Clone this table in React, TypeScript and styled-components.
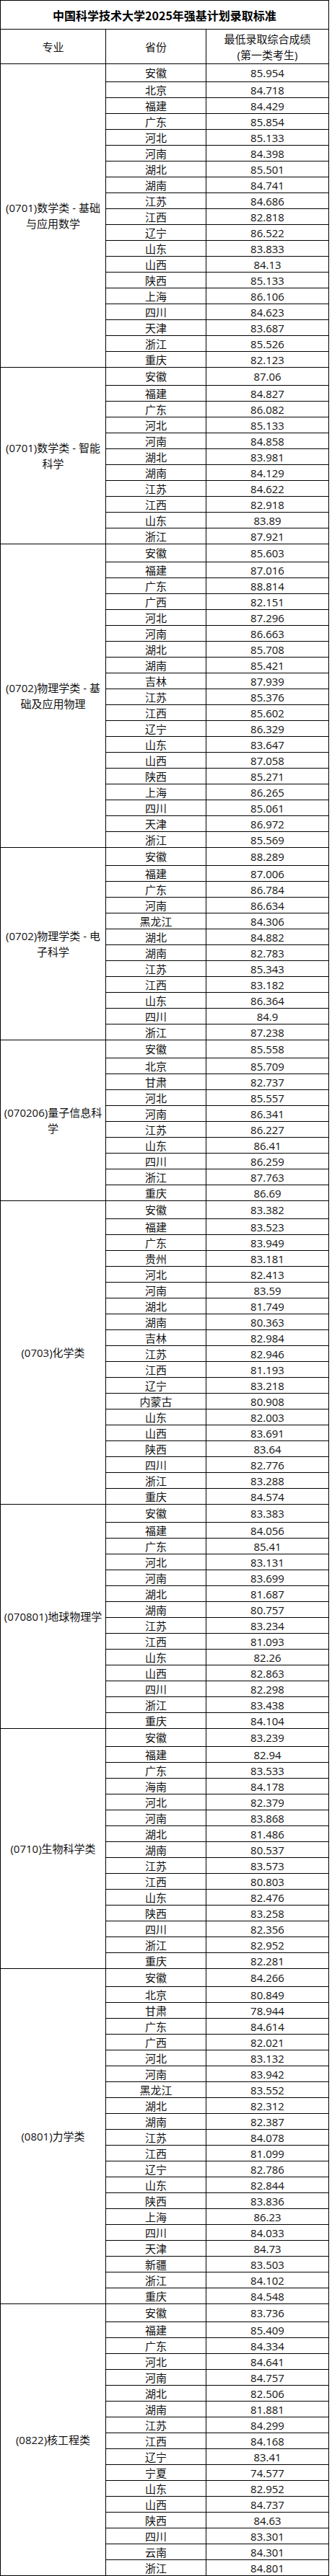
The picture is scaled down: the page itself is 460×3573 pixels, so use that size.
import React from "react"
import styled, { createGlobalStyle } from "styled-components"

const GlobalStyle = createGlobalStyle`
	html, body {
		margin: 0;
		padding: 0;
		background: #fff;
	}
	body {
		font-family: "Open Sans", "Noto Sans CJK SC", sans-serif;
		color: #111;
	}
`

interface Group {
	major: string[]
	rows: string
}

// "省份 成绩" pairs, separated by commas
const GROUPS: Group[] = [
	{
		major: ["(0701)数学类 - 基础", "与应用数学"],
		rows: "安徽 85.954,北京 84.718,福建 84.429,广东 85.854,河北 85.133,河南 84.398,湖北 85.501,湖南 84.741,江苏 84.686,江西 82.818,辽宁 86.522,山东 83.833,山西 84.13,陕西 85.133,上海 86.106,四川 84.623,天津 83.687,浙江 85.526,重庆 82.123",
	},
	{
		major: ["(0701)数学类 - 智能", "科学"],
		rows: "安徽 87.06,福建 84.827,广东 86.082,河北 85.133,河南 84.858,湖北 83.981,湖南 84.129,江苏 84.622,江西 82.918,山东 83.89,浙江 87.921",
	},
	{
		major: ["(0702)物理学类 - 基", "础及应用物理"],
		rows: "安徽 85.603,福建 87.016,广东 88.814,广西 82.151,河北 87.296,河南 86.663,湖北 85.708,湖南 85.421,吉林 87.939,江苏 85.376,江西 85.602,辽宁 86.329,山东 83.647,山西 87.058,陕西 85.271,上海 86.265,四川 85.061,天津 86.972,浙江 85.569",
	},
	{
		major: ["(0702)物理学类 - 电", "子科学"],
		rows: "安徽 88.289,福建 87.006,广东 86.784,河南 86.634,黑龙江 84.306,湖北 84.882,湖南 82.783,江苏 85.343,江西 83.182,山东 86.364,四川 84.9,浙江 87.238",
	},
	{
		major: ["(070206)量子信息科", "学"],
		rows: "安徽 85.558,北京 85.709,甘肃 82.737,河北 85.557,河南 86.341,江苏 86.227,山东 86.41,四川 86.259,浙江 87.763,重庆 86.69",
	},
	{
		major: ["(0703)化学类"],
		rows: "安徽 83.382,福建 83.523,广东 83.949,贵州 83.181,河北 82.413,河南 83.59,湖北 81.749,湖南 80.363,吉林 82.984,江苏 82.946,江西 81.193,辽宁 83.218,内蒙古 80.908,山东 82.003,山西 83.691,陕西 83.64,四川 82.776,浙江 83.288,重庆 84.574",
	},
	{
		major: ["(070801)地球物理学"],
		rows: "安徽 83.383,福建 84.056,广东 85.41,河北 83.131,河南 83.699,湖北 81.687,湖南 80.757,江苏 83.234,江西 81.093,山东 82.26,山西 82.863,四川 82.298,浙江 83.438,重庆 84.104",
	},
	{
		major: ["(0710)生物科学类"],
		rows: "安徽 83.239,福建 82.94,广东 83.533,海南 84.178,河北 82.379,河南 83.868,湖北 81.486,湖南 80.537,江苏 83.573,江西 80.803,山东 82.476,陕西 83.258,四川 82.356,浙江 82.952,重庆 82.281",
	},
	{
		major: ["(0801)力学类"],
		rows: "安徽 84.266,北京 80.849,甘肃 78.944,广东 84.614,广西 82.021,河北 83.132,河南 83.942,黑龙江 83.552,湖北 82.312,湖南 82.387,江苏 84.078,江西 81.099,辽宁 82.786,山东 82.844,陕西 83.836,上海 86.23,四川 84.033,天津 84.73,新疆 83.503,浙江 84.102,重庆 84.548",
	},
	{
		major: ["(0822)核工程类"],
		rows: "安徽 83.736,福建 85.409,广东 84.334,河北 84.641,河南 84.757,湖北 82.506,湖南 81.881,江苏 84.299,江西 84.168,辽宁 83.41,宁夏 74.577,山东 82.952,山西 84.737,陕西 84.63,四川 83.301,云南 84.301,浙江 84.801",
	},
]

const LINE = "1px solid #000"

const Sheet = styled.div`
	box-sizing: border-box;
	width: 456px;
	border: ${LINE};
	border-bottom: none;
	font-size: 15px;
`

const Title = styled.div`
	box-sizing: border-box;
	height: 40px;
	border-bottom: ${LINE};
	display: flex;
	align-items: center;
	justify-content: center;
	font-family: "Noto Sans CJK SC", sans-serif;
	font-size: 16px;
	font-weight: 700;
	color: #000;
`

const HeadRow = styled.div`
	box-sizing: border-box;
	height: 48px;
	display: flex;
	border-bottom: ${LINE};
`

const Cell = styled.div<{ $w?: number }>`
	box-sizing: border-box;
	flex: ${(p) => (p.$w ? `0 0 ${p.$w}px` : "1 1 auto")};
	display: flex;
	flex-direction: column;
	align-items: center;
	justify-content: center;
	text-align: center;
	line-height: 22px;
	white-space: nowrap;
	border-right: ${(p) => (p.$w ? LINE : "none")};
`

const GroupBox = styled.div`
	display: flex;
	border-bottom: ${LINE};
`

const Major = styled(Cell)`
	flex: 0 0 146px;
	border-right: ${LINE};
`

const Rows = styled.div`
	flex: 1 1 auto;
	display: flex;
	flex-direction: column;
`

const Row = styled.div`
	box-sizing: border-box;
	height: 22px;
	display: flex;
	border-top: ${LINE};

	&:first-child {
		border-top: none;
		height: 24px;
	}
`

const App: React.FC = () => {
	return (
		<>
			<GlobalStyle />
			<Sheet>
				<Title>中国科学技术大学2025年强基计划录取标准</Title>
				<HeadRow>
					<Cell $w={146}>专业</Cell>
					<Cell $w={139}>省份</Cell>
					<Cell>
						<span>最低录取综合成绩</span>
						<span>(第一类考生)</span>
					</Cell>
				</HeadRow>
				{GROUPS.map((g, gi) => (
					<GroupBox key={"g" + gi}>
						<Major>
							{g.major.map((line, li) => (
								<span key={li}>{line}</span>
							))}
						</Major>
						<Rows>
							{g.rows.split(",").map((r, ri) => {
								const [prov, score] = r.split(" ")
								return (
									<Row key={ri}>
										<Cell $w={139}>{prov}</Cell>
										<Cell>{score}</Cell>
									</Row>
								)
							})}
						</Rows>
					</GroupBox>
				))}
			</Sheet>
		</>
	)
}

export default App
